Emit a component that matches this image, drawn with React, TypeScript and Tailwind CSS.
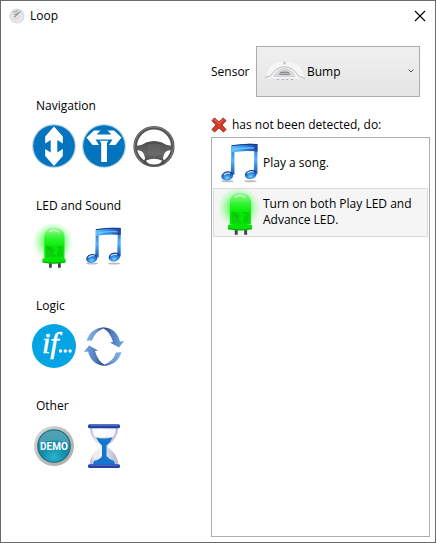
import type { ReactNode } from "react";

type IconProps = { className?: string };

function UpDownIcon() {
  return (
    <svg viewBox="0 0 44 44" className="size-11" aria-hidden="true">
      <circle cx="22" cy="22" r="22" fill="#b9d7ec" />
      <circle cx="22" cy="22" r="20.8" fill="#0474bf" />
      <path d="M22 2.500 30.800 12.500V19.500L25.300 16V28.500L30.800 25V32L22 42 13.200 32V25L18.700 28.500V16L13.200 19.500V12.500Z" fill="#fff" />
    </svg>
  );
}

function LeftRightIcon() {
  return (
    <svg viewBox="0 0 44 44" className="size-11" aria-hidden="true">
      <circle cx="22" cy="22" r="22" fill="#b9d7ec" />
      <circle cx="22" cy="22" r="20.8" fill="#0474bf" />
      <path d="M4.500 13.500 12 6.500H18.500L14.500 10.500H29.500L25.500 6.500H32L39.500 13.500 33.500 21H27L30.500 15.500H13.500L17 21H10.500Z" fill="#fff" />
      <path d="M17.500 16.800H26.500L25 18.800V38H19.200V18.800Z" fill="#fff" />
    </svg>
  );
}

function WheelIcon() {
  return (
    <svg viewBox="0 0 44 44" className="size-11" aria-hidden="true">
      <defs>
        <linearGradient id="hub" x1="0" y1="0" x2="0" y2="1">
          <stop offset="0" stopColor="#4a4a4a" />
          <stop offset=".5" stopColor="#686767" />
          <stop offset="1" stopColor="#424242" />
        </linearGradient>
      </defs>
      <circle cx="22" cy="22.5" r="18.8" fill="none" stroke="#555252" strokeWidth="3.6" />
      <circle cx="22" cy="22.5" r="19.4" fill="none" stroke="#8c8989" strokeWidth=".8" />
      <path d="M3 22Q10 21.5 14 18.5Q22 15.5 30 18.5Q34 21.5 41 22L40.5 26L36.5 26.5Q32 27 31 34.5L33 39Q22 45 11 39L13 34.5Q12 27 7.500 26.5L3.500 26Z" fill="url(#hub)" />
      <path d="M14 36.500Q22 33 30 36.500Q29 40.500 22 40.500Q15 40.500 14 36.500Z" fill="#fff" />
      <path d="M5.500 27Q12 27 12.500 35Q8 33 5.500 27ZM38.500 27Q32 27 31.500 35Q36 33 38.500 27Z" fill="#fff" />
      <path d="M15 21Q22 18.500 29 21L27 31Q22 33 17 31Z" fill="#706e6e" opacity=".45" />
    </svg>
  );
}

function LedIcon({ className = "size-11" }: IconProps) {
  return (
    <svg viewBox="0 0 44 44" className={className} aria-hidden="true">
      <defs>
        <radialGradient id="glow" cx="50%" cy="50%" r="50%">
          <stop offset="0" stopColor="#3cff3c" />
          <stop offset=".5" stopColor="#5cff5c" stopOpacity=".75" />
          <stop offset="1" stopColor="#8fff8f" stopOpacity="0" />
        </radialGradient>
        <linearGradient id="bulb" x1="0" y1="0" x2="0" y2="1">
          <stop offset="0" stopColor="#9af79a" />
          <stop offset=".35" stopColor="#2ff52f" />
          <stop offset=".65" stopColor="#02ea02" />
          <stop offset="1" stopColor="#00f400" />
        </linearGradient>
      </defs>
      <ellipse cx="21" cy="18" rx="20.500" ry="20" fill="url(#glow)" />
      <path d="M17 38h2.800v5.800H17zM26 38h2.800v5.800H26z" fill="#3f4a42" />
      <path d="M12.300 34V12Q13 4 22.300 3.700Q31.800 4 32.500 12V34Z" fill="url(#bulb)" />
      <path d="M14 22h6l3 4-2 2 4 5H14ZM24 22h7v11h-3l-3-6 2-2Z" fill="#0bd00b" />
      <path d="M15 22.500 20 27M25 29l2 4" stroke="#0a9f12" strokeWidth=".8" />
      <path d="M10.500 34.500Q22 31.500 33.500 34.500V38Q22 40.800 10.500 38Z" fill="#06e306" />
      <path d="M10.500 37Q22 39.500 33.500 37V38.500Q22 41 10.500 38.500Z" fill="#08b80c" />
      <path d="M17 8Q22 4.500 27 8" stroke="#c6fcc6" strokeWidth="1.500" fill="none" />
    </svg>
  );
}

function NoteIcon({ className = "size-11" }: IconProps) {
  return (
    <svg viewBox="0 0 44 44" className={className} aria-hidden="true">
      <defs>
        <linearGradient id="beam" x1="0" y1="0" x2="1" y2="0">
          <stop offset="0" stopColor="#62c6fa" />
          <stop offset=".5" stopColor="#2f8be8" />
          <stop offset="1" stopColor="#1c3f9c" />
        </linearGradient>
        <linearGradient id="stem" x1="0" y1="0" x2="0" y2="1">
          <stop offset="0" stopColor="#2260bd" />
          <stop offset=".5" stopColor="#58b4f5" />
          <stop offset="1" stopColor="#1956b9" />
        </linearGradient>
        <radialGradient id="head" cx="45%" cy="70%" r="65%">
          <stop offset="0" stopColor="#7bd3fb" />
          <stop offset=".5" stopColor="#2b83df" />
          <stop offset="1" stopColor="#14338f" />
        </radialGradient>
      </defs>
      <ellipse cx="10" cy="39.500" rx="6" ry="1" fill="#b9bcc2" />
      <ellipse cx="32" cy="39.500" rx="6" ry="1" fill="#b9bcc2" />
      <path d="M13.800 5.500h2.900V33.500L13.200 32Z" fill="url(#stem)" />
      <path d="M35.800 5h2.900V32.500L35.200 31Z" fill="url(#stem)" />
      <path d="M13.800 5.200Q26 3 38.700 4V11Q26 9.500 13.800 12Z" fill="url(#beam)" />
      <path d="M14 5.600Q26 3.600 38.700 4.400" stroke="#173a87" strokeWidth="1" fill="none" />
      <path d="M16.500 9Q26 7 35.500 7.700" stroke="#80d1fb" strokeWidth="1.500" fill="none" opacity=".7" />
      <ellipse cx="9.800" cy="34.400" rx="5.700" ry="4.300" transform="rotate(-15 9.800 34.400)" fill="url(#head)" />
      <ellipse cx="32.300" cy="33" rx="5.700" ry="4.300" transform="rotate(-15 32.300 33)" fill="url(#head)" />
      <path d="M6.500 33.500Q9 30.800 12.500 32M29 32Q31.500 29.500 35 30.700" stroke="#b5e6fd" strokeWidth="1.300" fill="none" />
    </svg>
  );
}

function IfIcon() {
  return (
    <svg viewBox="0 0 44 44" className="size-11" aria-hidden="true">
      <circle cx="22" cy="22" r="22" fill="#03a4e4" />
      <text x="10" y="29" fill="#fff" stroke="#fff" strokeWidth=".6" fontSize="30" fontStyle="italic" fontFamily="'Liberation Serif', serif">
        if
      </text>
      <circle cx="28.500" cy="27" r="1.700" fill="#fff" />
      <circle cx="33.300" cy="27" r="1.700" fill="#fff" />
      <circle cx="38.100" cy="27" r="1.700" fill="#fff" />
    </svg>
  );
}

function CycleIcon() {
  const arrow = "M4.500 16.800Q8.500 4.200 21.500 3.200Q34.500 4 38 17.500L42.200 17 37 23.500 28 18.500 31 18Q28 7.500 21.500 4.500Q13 7.500 10 16.500Z";
  return (
    <svg viewBox="0 0 44 44" className="size-11" aria-hidden="true">
      <defs>
        <linearGradient id="cycle" x1="0" y1="0" x2="1" y2="0">
          <stop offset="0" stopColor="#7db2ea" />
          <stop offset=".25" stopColor="#6f9bd3" />
          <stop offset=".5" stopColor="#2e4a86" />
          <stop offset=".7" stopColor="#5480bf" />
          <stop offset="1" stopColor="#75a9e6" />
        </linearGradient>
      </defs>
      <path d={arrow} fill="url(#cycle)" />
      <path d={arrow} fill="url(#cycle)" transform="rotate(180 22 22.500)" />
    </svg>
  );
}

function DemoIcon() {
  return (
    <svg viewBox="0 0 44 44" className="size-11" aria-hidden="true">
      <defs>
        <linearGradient id="rim" x1="0" y1="0" x2="1" y2="1">
          <stop offset="0" stopColor="#dcdcdc" />
          <stop offset=".5" stopColor="#bdbdbd" />
          <stop offset="1" stopColor="#a9a9a9" />
        </linearGradient>
        <radialGradient id="teal" cx="50%" cy="85%" r="80%">
          <stop offset="0" stopColor="#2cb4ce" />
          <stop offset=".5" stopColor="#0f8aa6" />
          <stop offset="1" stopColor="#2f8ca3" />
        </radialGradient>
      </defs>
      <circle cx="22" cy="22" r="20" fill="url(#rim)" />
      <circle cx="22" cy="22" r="16.800" fill="#126a80" />
      <circle cx="22" cy="22" r="15.800" fill="url(#teal)" />
      <path d="M7 19Q9 7 22 6.500Q35 7 37 19Q22 14 7 19Z" fill="#fff" opacity=".18" />
      <text x="22" y="26" textAnchor="middle" fill="#fff" fontSize="10" fontWeight="700" fontFamily="Roboto, 'Liberation Sans', sans-serif">
        DEMO
      </text>
    </svg>
  );
}

function HourglassIcon() {
  return (
    <svg viewBox="0 0 44 44" className="size-11" aria-hidden="true">
      <defs>
        <linearGradient id="glass" x1="0" y1="0" x2="1" y2="0">
          <stop offset="0" stopColor="#b9b9cf" />
          <stop offset=".35" stopColor="#f3f3f9" />
          <stop offset="1" stopColor="#b4b4cd" />
        </linearGradient>
      </defs>
      <path d="M8 4H36Q36 14 26 21.500V23.500Q36 30 36.500 41H7.500Q8 30 18 23.500V21.500Q8 14 8 4Z" fill="url(#glass)" />
      <path d="M10 4.500H34Q34 9 31 13H13Q10 9 10 4.500Z" fill="#fff" opacity=".85" />
      <path d="M14 13.500Q22 15.500 30.500 13.500Q29 18 24.500 21.500V32Q27 35.500 32 37L33 40.500H11L12 37Q18 35.500 20 32V21.500Q16 18 14 13.500Z" fill="#1676cd" />
      <path d="M11 29Q12.500 26 16 24.500L15 34 10 37Z" fill="#fff" opacity=".5" />
      <rect x="6" y="0.300" width="32" height="4" rx="1.500" fill="#2443a8" />
      <rect x="6" y="40.200" width="32" height="3.800" rx="1.500" fill="#2443a8" />
      <path d="M8 1.500h28M8 41.300h28" stroke="#4b76d3" strokeWidth=".8" />
    </svg>
  );
}

function BumpIcon({ className }: IconProps) {
  return (
    <svg viewBox="0 0 42 22" className={className} aria-hidden="true">
      <path d="M1 19Q3 5 12 2Q21-.5 30 2Q39 5 41 19Z" fill="#f5f5f6" stroke="#e5e5e7" strokeWidth=".7" />
      <circle cx="20.500" cy="3" r="1.500" fill="#c9c9cc" />
      <path d="M1 17.500 6.500 16Q12 7 20.500 6.700Q29 7 34.500 16L41 18.500" fill="none" stroke="#b4b4b9" strokeWidth=".9" />
      <path d="M10 16.500Q13 9 20.500 8.500Q28 9 31 16.500Z" fill="#dcdcdf" stroke="#c2c2c6" strokeWidth=".6" />
      <path d="M14 15Q16 10.500 20.500 10.500Q25.500 10.500 27 15Z" fill="#b9b9bd" />
      <path d="M16 12.500h9M15.500 14.500h10" stroke="#85858b" strokeWidth=".9" />
      <path d="M13 19.500h2M18 19.500h2M22 19.500h2M27 19.500h2" stroke="#b0b0b7" strokeWidth="1" />
    </svg>
  );
}

function RobotIcon() {
  return (
    <svg viewBox="0 0 16 16" className="size-4" aria-hidden="true">
      <circle cx="8" cy="8" r="7.600" fill="#dcdde0" />
      <circle cx="8" cy="8.500" r="6" fill="#e6e7e9" />
      <path d="M4 4.500 9 2.500M5 7 12 3.500M5 9.500 10 5" stroke="#9c9fa4" strokeWidth="1.200" />
      <path d="M6 12 12 8" stroke="#cfd1d4" strokeWidth="1" />
    </svg>
  );
}

function CrossIcon() {
  return (
    <svg viewBox="0 0 16 16" className="size-4" aria-hidden="true">
      <path d="M3.500 1 8 5.200 12.300 1 15 3.700 10.800 8 15 12.500 12.500 15 8 10.800 3.500 15 1 12.400 5.200 8 1 3.700Z" fill="#d9392b" stroke="#9c2218" strokeWidth="1" />
      <path d="M3.500 2.500 8 6.700 12.300 2.500" fill="none" stroke="#ea8074" strokeWidth=".8" />
    </svg>
  );
}

type Tool = { name: string; icon: ReactNode };

const groups: { title: string; tools: Tool[] }[] = [
  {
    title: "Navigation",
    tools: [
      { name: "Move", icon: <UpDownIcon /> },
      { name: "Turn", icon: <LeftRightIcon /> },
      { name: "Steer", icon: <WheelIcon /> },
    ],
  },
  {
    title: "LED and Sound",
    tools: [
      { name: "LED", icon: <LedIcon /> },
      { name: "Song", icon: <NoteIcon /> },
    ],
  },
  {
    title: "Logic",
    tools: [
      { name: "If", icon: <IfIcon /> },
      { name: "Loop", icon: <CycleIcon /> },
    ],
  },
  {
    title: "Other",
    tools: [
      { name: "Demo", icon: <DemoIcon /> },
      { name: "Wait", icon: <HourglassIcon /> },
    ],
  },
];

export default function App() {
  return (
    <div className="flex min-h-screen flex-col border border-[#6b6a6b] bg-white font-['Open_Sans','Noto_Sans',sans-serif] text-xs leading-4 text-black">
      <header className="flex h-[30px] items-center pr-[7px] pl-2">
        <RobotIcon />
        <h1 className="ml-[5px] flex-1">Loop</h1>
        <button type="button" aria-label="Close" className="p-0.5">
          <svg viewBox="0 0 12 12" className="size-3" aria-hidden="true">
            <path d="M1 1 11 11M11 1 1 11" stroke="#000" strokeWidth="1.100" />
          </svg>
        </button>
      </header>

      <main className="flex flex-1 pr-[5px] pb-[5px]">
        <aside className="flex w-[210px] shrink-0 flex-col gap-[30px] pt-[67px] pl-[31px]">
          {groups.map((group) => (
            <section key={group.title}>
              <h2 className="pl-1">{group.title}</h2>
              <div className="mt-[10px] flex gap-[6px]">
                {group.tools.map((tool) => (
                  <button key={tool.name} type="button" aria-label={tool.name} className="size-11">
                    {tool.icon}
                  </button>
                ))}
              </div>
            </section>
          ))}
        </aside>

        <section className="flex min-w-0 flex-1 flex-col pt-[15px]">
          <div className="flex items-center pr-[10px]">
            <label htmlFor="sensor" className="w-[45px] shrink-0">
              Sensor
            </label>
            <div className="relative flex-1">
              <select
                id="sensor"
                className="h-[51px] w-full appearance-none rounded-none border border-[#acacac] bg-linear-to-b from-[#f0f0f0] to-[#e5e5e5] pl-[50px]"
              >
                <option>Bump</option>
              </select>
              <BumpIcon className="pointer-events-none absolute top-[14px] left-2 h-[22px] w-[42px]" />
              <svg viewBox="0 0 6 4" className="pointer-events-none absolute top-[23px] right-[6px] h-1 w-[6px]" aria-hidden="true">
                <path d="M.5.5 3 3 5.500.5" fill="none" stroke="#555" />
              </svg>
            </div>
          </div>

          <div className="mt-5 flex items-center gap-[5px]">
            <CrossIcon />
            <p>has not been detected, do:</p>
          </div>

          <ul className="mt-1 flex-1 border border-[#abadb3] p-px">
            <li className="flex items-center border border-transparent px-[3px] pb-px">
              <NoteIcon className="size-[46px] shrink-0" />
              <span>Play a song.</span>
            </li>
            <li className="flex items-center border border-[#dadada] bg-[#f5f5f5] px-[3px] pb-px">
              <LedIcon className="size-[46px] shrink-0" />
              <span>Turn on both Play LED and Advance LED.</span>
            </li>
          </ul>
        </section>
      </main>
    </div>
  );
}
